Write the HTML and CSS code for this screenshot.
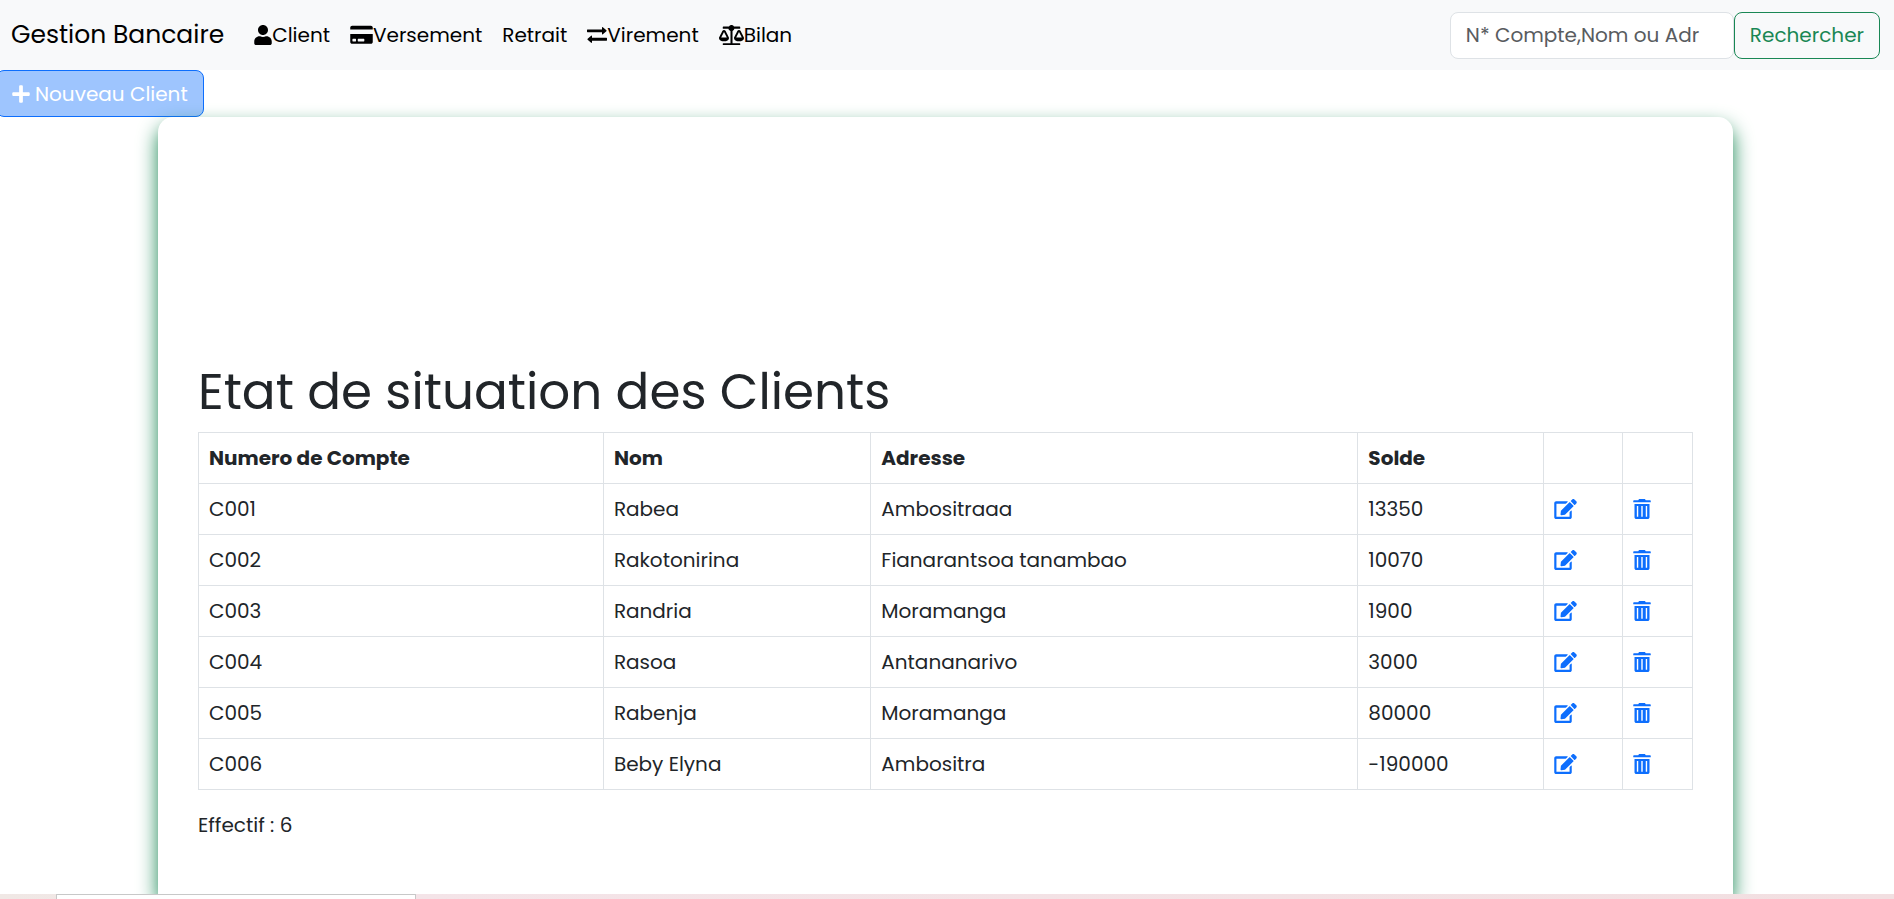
FILE: index.html
```
<!DOCTYPE html>
<html lang="fr">
<head>
<meta charset="utf-8">
<meta name="viewport" content="width=device-width, initial-scale=1">
<title>Gestion Bancaire</title>
<link rel="stylesheet" href="styles.css">
</head>
<body>
<svg class="sprite" aria-hidden="true">
  <symbol id="i-user" viewBox="0 0 448 512"><path d="M224 256c70.7 0 128-57.3 128-128S294.7 0 224 0 96 57.3 96 128s57.3 128 128 128zm89.6 32h-16.7c-22.2 10.2-46.9 16-72.9 16s-50.6-5.8-72.9-16h-16.7C60.2 288 0 348.2 0 422.4V464c0 26.5 21.5 48 48 48h352c26.5 0 48-21.5 48-48v-41.6c0-74.2-60.2-134.4-134.4-134.4z"/></symbol>
  <symbol id="i-card" viewBox="0 0 576 512"><path d="M0 432c0 26.5 21.5 48 48 48h480c26.5 0 48-21.5 48-48V232H0v200zm192-68c0-6.6 5.4-12 12-12h144c6.600 0 12 5.400 12 12v48c0 6.600-5.400 12-12 12H204c-6.600 0-12-5.400-12-12v-48zm-136 0c0-6.600 5.400-12 12-12h68c6.600 0 12 5.400 12 12v48c0 6.600-5.400 12-12 12H68c-6.600 0-12-5.400-12-12v-48zM576 64v48H0V64c0-26.500 21.500-48 48-48h480c26.500 0 48 21.500 48 48z"/></symbol>
  <symbol id="i-exchange" viewBox="0 0 512 512"><path d="M12 112h372V68c0-12 14-18 22-10l90 78c8 8 8 16 0 24l-90 78c-8 8-22 2-22-10v-44H12c-7 0-12-5-12-12v-48c0-7 5-12 12-12zM500 328H128v-44c0-12-14-18-22-10L16 352c-8 8-8 16 0 24l90 78c8 8 22 2 22-10v-44h372c7 0 12-5 12-12v-48c0-7-5-12-12-12z"/></symbol>
  <symbol id="i-scale" viewBox="0 0 640 512"><path d="M256 336h-.02c0-16.180 1.340-8.730-85.050-181.510-17.650-35.290-68.190-35.360-85.870 0C-2.060 328.750.02 320.330.02 336H0c0 44.180 57.310 80 128 80s128-35.820 128-80zM128 176l72 144H56l72-144zm511.980 160c0-16.180 1.340-8.730-85.050-181.510-17.650-35.290-68.190-35.360-85.870 0-87.120 174.260-85.040 165.840-85.040 181.510H384c0 44.180 57.310 80 128 80s128-35.820 128-80h-.02zM440 320l72-144 72 144H440zm88 144H346V153.250c23.510-10.290 41.160-31.480 46.390-57.250H528c8.840 0 16-7.160 16-16V56c0-8.840-7.160-16-16-16H383.640C369.040 12.680 346.090 0 320 0s-49.040 12.680-63.640 40H112c-8.840 0-16 7.160-16 16v24c0 8.840 7.160 16 16 16h129.610c5.230 25.760 22.870 46.960 52.390 57.250V464H112c-8.840 0-16 7.160-16 16v16c0 8.840 7.160 16 16 16h416c8.840 0 16-7.160 16-16v-16c0-8.840-7.160-16-16-16z"/></symbol>
  <symbol id="i-plus" viewBox="0 0 448 512"><path d="M416 208H272V64c0-17.670-14.330-32-32-32h-32c-17.670 0-32 14.330-32 32v144H32c-17.670 0-32 14.330-32 32v32c0 17.670 14.330 32 32 32h144v144c0 17.670 14.330 32 32 32h32c17.670 0 32-14.330 32-32V304h144c17.670 0 32-14.330 32-32v-32c0-17.670-14.330-32-32-32z"/></symbol>
  <symbol id="i-edit" viewBox="0 0 576 512"><path d="M402.600 83.200l90.200 90.200c3.800 3.800 3.800 10 0 13.800L274.400 405.600l-92.800 10.300c-12.400 1.400-22.900-9.100-21.500-21.500l10.300-92.800L388.800 83.200c3.800-3.800 10-3.800 13.800 0zm162-22.900l-48.800-48.800c-15.200-15.200-39.900-15.200-55.200 0l-35.400 35.400c-3.800 3.800-3.800 10 0 13.800l90.200 90.200c3.800 3.800 10 3.800 13.800 0l35.400-35.400c15.200-15.300 15.200-40 0-55.200zM392 346.200V456H56V120h237.800c3.200 0 6.200-1.300 8.500-3.500l40-40c7.600-7.600 2.200-20.500-8.500-20.500H48C21.500 56 0 77.500 0 104v360c0 26.500 21.500 48 48 48h352c26.500 0 48-21.500 48-48V306.200c0-10.700-12.900-16-20.500-8.500l-32 32c-2.200 2.300-3.500 13.300-3.500 16.500z"/></symbol>
  <symbol id="i-trash" viewBox="0 0 448 512"><path fill-rule="evenodd" d="M16 32h112l12-20c4-8 10-12 20-12h128c10 0 16 4 20 12l12 20h112c9 0 16 7 16 16v32H0V48c0-9 7-16 16-16zM32 128h384v336c0 26.500-21.500 48-48 48H80c-26.500 0-48-21.500-48-48zM92 176v280h36V176zm114 0v280h36V176zm114 0v280h36V176z"/></symbol>
</svg>

<nav class="navbar">
  <a class="brand" href="#">Gestion Bancaire</a>
  <ul class="menu">
    <li><a href="#"><svg class="icon w-s"><use href="#i-user"/></svg>Client</a></li>
    <li><a href="#"><svg class="icon w-l"><use href="#i-card"/></svg>Versement</a></li>
    <li><a href="#">Retrait</a></li>
    <li><a href="#"><svg class="icon w-m"><use href="#i-exchange"/></svg>Virement</a></li>
    <li><a href="#"><svg class="icon w-xl"><use href="#i-scale"/></svg>Bilan</a></li>
  </ul>
  <form class="search">
    <input type="search" placeholder="N* Compte,Nom ou Adr" aria-label="Rechercher un client">
    <button type="submit">Rechercher</button>
  </form>
</nav>

<button class="new-client" type="button"><svg class="icon w-s"><use href="#i-plus"/></svg>Nouveau Client</button>

<main class="panel">
  <h1>Etat de situation des Clients</h1>
  <table class="clients">
    <colgroup><col class="c-num"><col class="c-nom"><col class="c-adr"><col class="c-solde"><col class="c-edit"><col class="c-del"></colgroup>
    <thead>
      <tr><th>Numero de Compte</th><th>Nom</th><th>Adresse</th><th>Solde</th><th></th><th></th></tr>
    </thead>
    <tbody>
      <tr><td>C001</td><td>Rabea</td><td>Ambositraaa</td><td>13350</td><td><a href="#" aria-label="Modifier"><svg class="icon w-l"><use href="#i-edit"/></svg></a></td><td><a href="#" aria-label="Supprimer"><svg class="icon w-s"><use href="#i-trash"/></svg></a></td></tr>
      <tr><td>C002</td><td>Rakotonirina</td><td>Fianarantsoa tanambao</td><td>10070</td><td><a href="#" aria-label="Modifier"><svg class="icon w-l"><use href="#i-edit"/></svg></a></td><td><a href="#" aria-label="Supprimer"><svg class="icon w-s"><use href="#i-trash"/></svg></a></td></tr>
      <tr><td>C003</td><td>Randria</td><td>Moramanga</td><td>1900</td><td><a href="#" aria-label="Modifier"><svg class="icon w-l"><use href="#i-edit"/></svg></a></td><td><a href="#" aria-label="Supprimer"><svg class="icon w-s"><use href="#i-trash"/></svg></a></td></tr>
      <tr><td>C004</td><td>Rasoa</td><td>Antananarivo</td><td>3000</td><td><a href="#" aria-label="Modifier"><svg class="icon w-l"><use href="#i-edit"/></svg></a></td><td><a href="#" aria-label="Supprimer"><svg class="icon w-s"><use href="#i-trash"/></svg></a></td></tr>
      <tr><td>C005</td><td>Rabenja</td><td>Moramanga</td><td>80000</td><td><a href="#" aria-label="Modifier"><svg class="icon w-l"><use href="#i-edit"/></svg></a></td><td><a href="#" aria-label="Supprimer"><svg class="icon w-s"><use href="#i-trash"/></svg></a></td></tr>
      <tr><td>C006</td><td>Beby Elyna</td><td>Ambositra</td><td>-190000</td><td><a href="#" aria-label="Modifier"><svg class="icon w-l"><use href="#i-edit"/></svg></a></td><td><a href="#" aria-label="Supprimer"><svg class="icon w-s"><use href="#i-trash"/></svg></a></td></tr>
    </tbody>
  </table>
  <p class="count">Effectif : 6</p>
</main>

<footer class="strip"><div class="strip-tab"></div></footer>
</body>
</html>
```
FILE: styles.css
```
* { box-sizing: border-box; }

body {
  margin: 0;
  min-height: 100vh;
  display: flex;
  flex-direction: column;
  align-items: stretch;
  background: #fff;
  color: #212529;
  font: 400 20px/30px Poppins, Inter, "Open Sans", sans-serif;
}

a { color: inherit; text-decoration: none; }
.sprite { display: none; }

.icon {
  height: 20px;
  fill: currentColor;
  flex: none;
}
.w-s { width: 18px; }
.w-m { width: 20px; }
.w-l { width: 23px; }
.w-xl { width: 25px; }

.navbar {
  display: flex;
  align-items: center;
  min-height: 70px;
  padding: 10px 14px 10px 11px;
  background: #f8f9fa;
  color: #000;
}
.brand { font-size: 25px; margin-right: 20px; }
.menu {
  display: flex;
  flex: 1;
  margin: 0;
  padding: 0;
  list-style: none;
}
.menu a {
  display: flex;
  align-items: center;
  padding: 10px;
}

.search { display: flex; }
.search input,
.search button {
  height: 47px;
  border: 1px solid #dee2e6;
  border-radius: 8px;
  padding: 0 15px;
  font: inherit;
}
.search input { width: 284px; background: #fff; color: #212529; }
.search input::placeholder { color: #595c5f; opacity: 1; }
.search button { background: transparent; border-color: #198754; color: #198754; }

.new-client {
  align-self: flex-start;
  display: flex;
  align-items: center;
  gap: 5px;
  height: 47px;
  margin-left: -4px;
  padding: 0 15px;
  border: 1px solid #0d6efd;
  border-radius: 8px;
  background: #9ec5fe;
  color: #fff;
  font: inherit;
}

.panel {
  flex: 1;
  margin: 0 161px 0 158px;
  padding: 245px 40px 35px;
  border-radius: 15px 15px 0 0;
  background: #fff;
  box-shadow: 0 10px 20px #198754;
}
h1 {
  margin: 0 0 10px;
  font-size: 50px;
  font-weight: 400;
  line-height: 60px;
}

.clients {
  width: 100%;
  table-layout: fixed;
  border-collapse: collapse;
}
.clients th,
.clients td {
  height: 51px;
  padding: 10px;
  border: 1px solid #dee2e6;
  text-align: left;
}
.clients th { font-weight: 700; }
.clients td a { display: flex; color: #0d6efd; }
.c-num { width: 27.100%; }
.c-nom { width: 17.900%; }
.c-adr { width: 32.600%; }
.c-solde { width: 12.400%; }
.c-edit { width: 5.300%; }
.c-del { width: 4.700%; }

.count { margin: 20px 0 0; }

.strip {
  position: relative;
  height: 5px;
  padding-left: 56px;
  background: linear-gradient(90deg, #f0e8e5, #f4e4e8 22%, #f2dfe1);
}
.strip-tab {
  width: 360px;
  height: 5px;
  border: 1px solid #c8c8c8;
  border-bottom: 0;
  background: #fff;
}
```
